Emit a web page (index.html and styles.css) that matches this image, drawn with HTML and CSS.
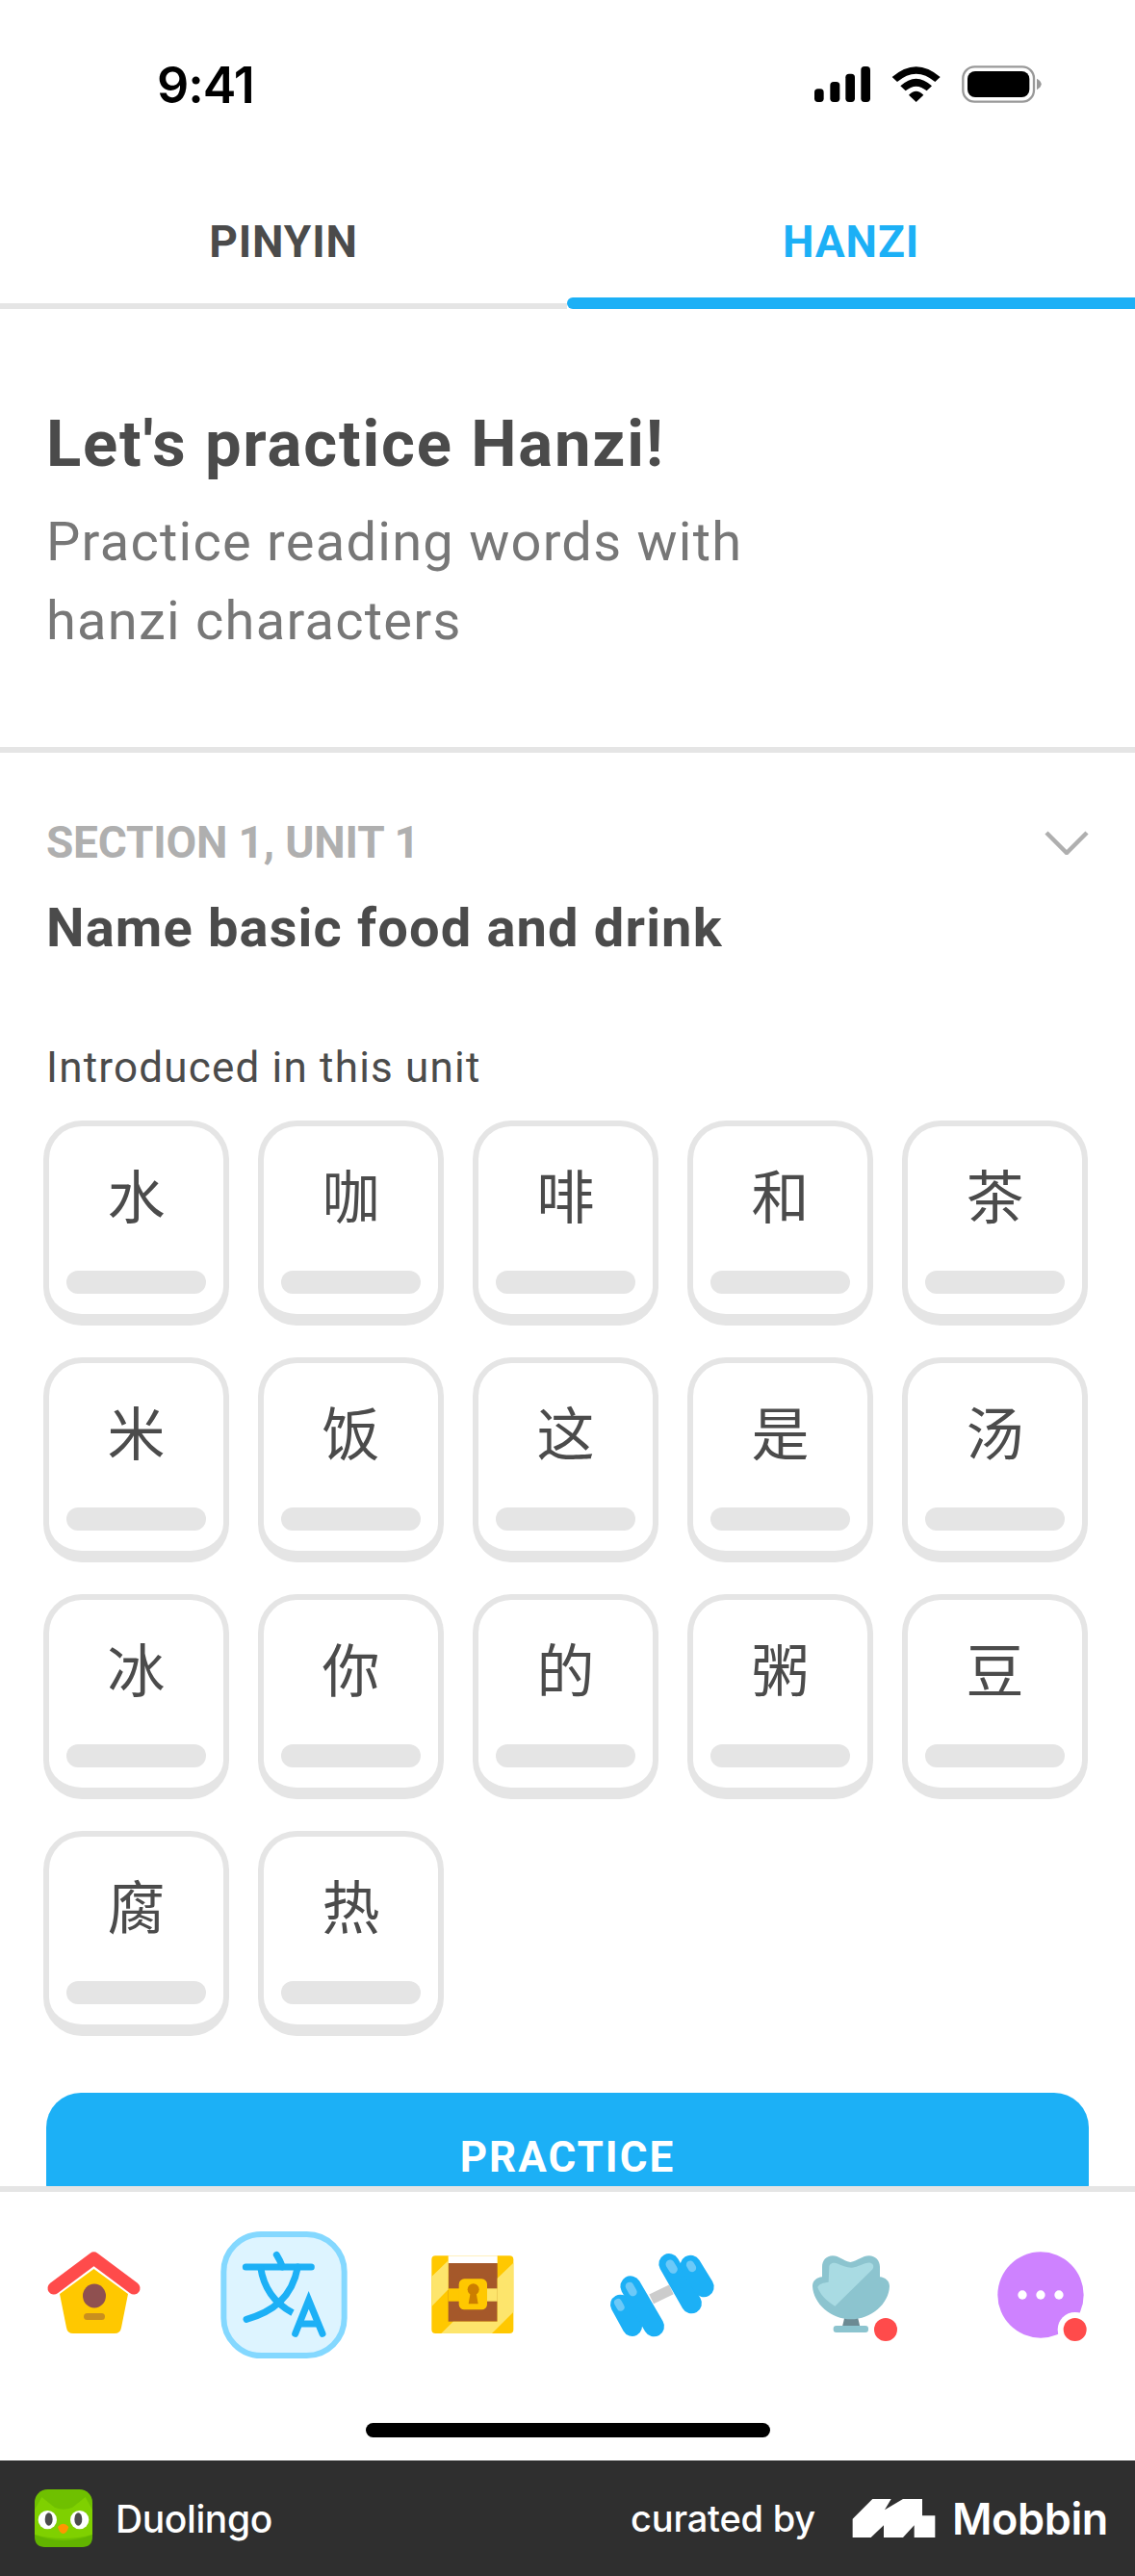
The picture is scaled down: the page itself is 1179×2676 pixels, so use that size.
FILE: index.html
```html
<!DOCTYPE html>
<html lang="en">
<head>
    <meta charset="UTF-8">
    <meta name="viewport" content="width=device-width, initial-scale=1.0">
    <title>Duolingo - Hanzi practice</title>
    <link rel="stylesheet" href="styles.css">
</head>
<body>
<div class="screen">
    <!-- Status bar -->
    <div class="status">
        <span class="status-time">9:41</span>
        <svg class="status-icons" viewBox="0 0 810 210">
            <rect x="78" y="127" width="29" height="41" rx="11"/>
            <rect x="127" y="105" width="30" height="63" rx="11"/>
            <rect x="175" y="80" width="29" height="88" rx="11"/>
            <rect x="223" y="57" width="29" height="111" rx="11"/>
            <path d="M320 90 Q395 25 470 90 L454 105 Q395 55 336 105Z"/>
            <path d="M346 118 Q395 72 444 118 L428 133 Q395 105 362 133Z"/>
            <path d="M372 146 Q395 122 418 146 L395 168Z"/>
            <rect x="541" y="58" width="221" height="109" rx="36" fill="none" stroke="#999" stroke-width="7"/>
            <rect x="555" y="72" width="193" height="81" rx="24"/>
            <path d="M771 95 Q785 103 785 112 Q785 122 771 130Z" fill="#999"/>
        </svg>
    </div>

    <!-- Tabs -->
    <div class="tabs">
        <div class="tab">
            <span class="tab-label">PINYIN</span>
            <div class="tab-rule"></div>
        </div>
        <div class="tab tab-active">
            <span class="tab-label">HANZI</span>
            <div class="tab-rule"></div>
        </div>
    </div>

    <main class="content">
        <section class="intro">
            <h1>Let's practice Hanzi!</h1>
            <p>Practice reading words with<br>hanzi characters</p>
        </section>

        <section class="unit">
            <div class="unit-head">
                <span class="unit-label">SECTION 1, UNIT 1</span>
                <svg class="chevron" viewBox="0 0 46 25">
                    <path d="M2 2 L23 23 L44 2" fill="none" stroke="#afafaf" stroke-width="4.5"/>
                </svg>
            </div>
            <h2>Name basic food and drink</h2>
            <div class="unit-note">Introduced in this unit</div>

            <div class="chars">
                <div class="char-card"><div class="char">水</div><div class="char-bar"></div></div>
                <div class="char-card"><div class="char">咖</div><div class="char-bar"></div></div>
                <div class="char-card"><div class="char">啡</div><div class="char-bar"></div></div>
                <div class="char-card"><div class="char">和</div><div class="char-bar"></div></div>
                <div class="char-card"><div class="char">茶</div><div class="char-bar"></div></div>
                <div class="char-card"><div class="char">米</div><div class="char-bar"></div></div>
                <div class="char-card"><div class="char">饭</div><div class="char-bar"></div></div>
                <div class="char-card"><div class="char">这</div><div class="char-bar"></div></div>
                <div class="char-card"><div class="char">是</div><div class="char-bar"></div></div>
                <div class="char-card"><div class="char">汤</div><div class="char-bar"></div></div>
                <div class="char-card"><div class="char">冰</div><div class="char-bar"></div></div>
                <div class="char-card"><div class="char">你</div><div class="char-bar"></div></div>
                <div class="char-card"><div class="char">的</div><div class="char-bar"></div></div>
                <div class="char-card"><div class="char">粥</div><div class="char-bar"></div></div>
                <div class="char-card"><div class="char">豆</div><div class="char-bar"></div></div>
                <div class="char-card"><div class="char">腐</div><div class="char-bar"></div></div>
                <div class="char-card"><div class="char">热</div><div class="char-bar"></div></div>
            </div>

            <button class="practice">PRACTICE</button>
        </section>
    </main>

    <!-- Bottom navigation -->
    <nav class="nav">
        <div class="nav-icons">
            <svg class="nav-icon" viewBox="0 0 132 132">
                <path d="M65.500 39 L101 65 L94 100 Q93 106 87 106 H44 Q38 106 37 100 L30 65Z" fill="#ffc800"/>
                <path d="M24 59 L65.500 28 L107 59" fill="none" stroke="#ff4b4b" stroke-width="13" stroke-linecap="round" stroke-linejoin="round"/>
                <ellipse cx="66" cy="67" rx="12" ry="12.500" fill="#8f5050"/>
                <rect x="55" y="85" width="22" height="7" rx="3.500" fill="#c98f1e"/>
            </svg>
            <svg class="nav-icon" viewBox="87 84 396 396">
                <rect x="97" y="93" width="376" height="378" rx="117" fill="#ddf4ff" stroke="#84d8ff" stroke-width="18"/>
                <g fill="none" stroke="#1cb0f6" stroke-width="21" stroke-linecap="round">
                    <path d="M166 195 H370"/>
                    <path d="M262 157 Q272 172 280 195"/>
                    <path d="M212 195 C222 265 260 310 312 338" stroke-linecap="butt"/>
                    <path d="M328 195 C310 290 250 335 168 358"/>
                    <path d="M320 403 L362 298 L405 403"/>
                    <path d="M335 372 H392" stroke-linecap="butt"/>
                </g>
            </svg>
            <svg class="nav-icon" viewBox="675 84 396 396">
                <rect x="745" y="160" width="255" height="242" rx="12" fill="#ffc800"/>
                <rect x="797" y="160" width="153" height="24" fill="#fff"/>
                <rect x="797" y="183" width="153" height="182" fill="#a5582a"/>
                <path d="M745 225 L797 175 V265 L745 318Z" fill="#fde56c"/>
                <path d="M950 230 L1000 182 V335 L933 402 H775 L812 365 H950Z" fill="#fde56c"/>
                <rect x="797" y="262" width="40" height="40" fill="#ffc800"/>
                <rect x="912" y="262" width="38" height="40" fill="#fde56c"/>
                <rect x="830" y="232" width="88" height="96" rx="17" fill="#ffc800"/>
                <circle cx="875" cy="265" r="18" fill="#cc7e00"/>
                <path d="M866 275 H884 L890 310 H860Z" fill="#cc7e00"/>
            </svg>
            <svg class="nav-icon" viewBox="6 -6 396 396">
                <path d="M170 205 L232 175" stroke="#ccc" stroke-width="32"/>
                <g fill="none" stroke="#1cb0f6" stroke-linecap="round">
                    <path d="M73 222 L110 290" stroke-width="62"/>
                    <path d="M105 165 L178 290" stroke-width="64"/>
                    <path d="M225 95 L295 218" stroke-width="64"/>
                    <path d="M292 100 L333 167" stroke-width="64"/>
                </g>
                <g fill="none" stroke="#6cc9f8" stroke-linecap="round">
                    <path d="M102 165 L112 183" stroke-width="26"/>
                    <path d="M66 216 L74 230" stroke-width="24"/>
                    <path d="M228 96 L238 112" stroke-width="27"/>
                    <path d="M291 98 L297 108" stroke-width="25"/>
                </g>
            </svg>
            <svg class="nav-icon" viewBox="114 84 396 396">
                <path d="M292 352 H333 L340 380 H285Z" fill="#6c8a93"/>
                <rect x="257" y="378" width="109" height="21" rx="9" fill="#8cc4cf"/>
                <path d="M310 180 C285 175 275 160 255 160 C235 160 222 175 222 195 L222 226 C205 228 192 238 192 255 C195 310 250 358 312 358 C375 358 430 310 432 255 C432 238 418 228 402 226 L402 195 C402 175 388 160 368 160 C348 160 335 175 310 180Z" fill="#8cc4cf"/>
                <path d="M244 195 C244 185 255 180 265 183 C285 190 300 198 315 197 C335 196 355 180 372 182 C382 184 385 195 378 203 L262 317 C235 300 215 280 208 258 C212 248 225 244 242 242Z" fill="#a9dbe3"/>
                <circle cx="420" cy="390" r="36" fill="#ff4b4b"/>
            </svg>
            <svg class="nav-icon" viewBox="705 84 396 396">
                <circle cx="903" cy="282" r="134" fill="#ce82ff"/>
                <circle cx="846" cy="282" r="14" fill="#fff"/>
                <circle cx="903" cy="282" r="14" fill="#fff"/>
                <circle cx="960" cy="282" r="14" fill="#fff"/>
                <circle cx="1010" cy="390" r="54" fill="#fff"/>
                <circle cx="1010" cy="390" r="36" fill="#ff4b4b"/>
            </svg>
        </div>
        <div class="home-bar"></div>
    </nav>

    <!-- Footer strip -->
    <footer class="credits">
        <div class="credits-app">
            <svg class="app-logo" viewBox="48 48 180 180">
                <rect x="48" y="48" width="180" height="180" rx="40" fill="#6fc000"/>
                <path d="M48 112 L70 72 L110 104 Q138 116 166 104 L206 72 L228 112 V188 Q138 214 48 188Z" fill="#7fd000"/>
                <path d="M48 190 Q138 225 228 190 V195 Q228 228 195 228 H81 Q48 228 48 195Z" fill="#62b400"/>
                <circle cx="88" cy="143" r="29" fill="#fff"/>
                <circle cx="188" cy="143" r="29" fill="#fff"/>
                <ellipse cx="92" cy="141" rx="12" ry="20" fill="#4b4b4b"/>
                <ellipse cx="184" cy="141" rx="12" ry="20" fill="#4b4b4b"/>
                <path d="M120 165 Q137 145 154 165 Q148 186 137 186 Q126 186 120 165Z" fill="#ff9600"/>
            </svg>
            <span class="app-name">Duolingo</span>
        </div>
        <div class="credits-by">
            <span class="curated">curated by</span>
            <svg class="mobbin-logo" viewBox="728 78 257 120">
                <path d="M728 140 L790 78 H848 L828 112 L885 78 H945 V130 H985 V198 H920 V160 L885 198 H825 V160 L785 198 H728Z" fill="#fff"/>
            </svg>
            <span class="mobbin-name">Mobbin</span>
        </div>
    </footer>
</div>
</body>
</html>
```
FILE: styles.css
```css
* {
    box-sizing: border-box;
}
body {
    margin: 0;
    background-color: #fff;
    color: #4b4b4b;
    font-family: Roboto, "Noto Sans CJK SC", sans-serif;
}
h1, h2, p {
    margin: 0;
}
.screen {
    width: 1179px;
    height: 2676px;
    display: flex;
    flex-direction: column;
    overflow: hidden;
}

/* status bar */
.status {
    height: 170px;
    flex: none;
    display: flex;
    justify-content: space-between;
    align-items: center;
    padding: 0 89px 0 163px;
}
.status-time {
    font-family: Inter, sans-serif;
    font-size: 52px;
    font-weight: 600;
    color: #000;
    padding-top: 6px;
    letter-spacing: -1px;
}
.status-icons {
    width: 270px;
    height: 70px;
}

/* tabs */
.tabs {
    height: 151px;
    flex: none;
    display: grid;
    grid-template-columns: 589px 590px;
}
.tab {
    display: flex;
    flex-direction: column;
    justify-content: flex-end;
    align-items: center;
}
.tab-label {
    font-size: 46px;
    line-height: 46px;
    font-weight: 700;
    letter-spacing: 0.9px;
    margin-bottom: 41px;
}
.tab-rule {
    width: 100%;
    height: 6px;
    background-color: #e5e5e5;
}
.tab-active .tab-label {
    color: #1cb0f6;
    margin-bottom: 35px;
}
.tab-active .tab-rule {
    height: 12px;
    background-color: #1cb0f6;
    border-radius: 6px 0 0 6px;
}

/* main part */
.content {
    flex: 1;
    min-height: 0;
    overflow: hidden;
}
.intro {
    padding: 100px 48px 90px;
    border-bottom: 6px solid #e5e5e5;
}
.intro h1 {
    font-size: 67px;
    line-height: 80px;
    font-weight: 700;
    letter-spacing: 1.8px;
}
.intro p {
    margin-top: 21px;
    font-size: 56px;
    line-height: 82px;
    color: #777;
    letter-spacing: 1.25px;
}
.unit {
    padding: 65px 48px 0;
}
.unit-head {
    display: flex;
    justify-content: space-between;
    align-items: center;
}
.unit-label {
    font-size: 46px;
    line-height: 56px;
    font-weight: 700;
    color: #afafaf;
    letter-spacing: -0.2px;
}
.chevron {
    width: 46px;
    height: 25px;
}
.unit h2 {
    margin-top: 29px;
    font-size: 56px;
    line-height: 64px;
    font-weight: 700;
    letter-spacing: 1.15px;
}
.unit-note {
    margin-top: 88px;
    font-size: 44px;
    line-height: 50px;
    letter-spacing: 1.2px;
}

/* character cards */
.chars {
    margin: 30px 0 0 -3px;
    display: grid;
    grid-template-columns: repeat(5, 193px);
    grid-auto-rows: 213px;
    gap: 33px 30px;
}
.char-card {
    border: 6px solid #e5e5e5;
    border-bottom-width: 12px;
    border-radius: 40px;
    padding: 0 18px;
}
.char {
    height: 138px;
    margin-bottom: 12px;
    display: flex;
    align-items: center;
    justify-content: center;
    font-family: "Noto Sans CJK SC", sans-serif;
    font-size: 60px;
}
.char-bar {
    height: 24px;
    border-radius: 12px;
    background-color: #e5e5e5;
}
.practice {
    display: block;
    width: 1083px;
    height: 130px;
    margin-top: 59px;
    padding: 4px 0 0;
    border: 0;
    border-radius: 36px;
    background-color: #1cb0f6;
    color: #fff;
    font-family: Roboto, sans-serif;
    font-size: 44px;
    font-weight: 700;
    letter-spacing: 2px;
}

/* bottom nav */
.nav {
    height: 285px;
    flex: none;
    border-top: 6px solid #e5e5e5;
    padding-top: 41px;
    background-color: #fff;
}
.nav-icons {
    display: grid;
    grid-template-columns: repeat(6, 1fr);
    justify-items: center;
}
.nav-icon {
    width: 132px;
    height: 132px;
    display: block;
}
.home-bar {
    width: 420px;
    height: 15px;
    margin: 67px auto 0;
    border-radius: 8px;
    background-color: #000;
}

/* footer strip */
.credits {
    height: 120px;
    flex: none;
    display: flex;
    justify-content: space-between;
    align-items: center;
    padding: 0 28px 0 36px;
    background-color: #2f2f2f;
    color: #fff;
    font-family: Inter, sans-serif;
}
.credits-app, .credits-by {
    display: flex;
    align-items: center;
}
.app-logo {
    width: 60px;
    height: 60px;
    margin-right: 24px;
}
.app-name {
    font-size: 39px;
    font-weight: 500;
    letter-spacing: -0.4px;
}
.curated {
    font-size: 38px;
    font-weight: 500;
    letter-spacing: -0.2px;
}
.mobbin-logo {
    width: 87px;
    height: 40px;
    margin: 0 17px 0 38px;
}
.mobbin-name {
    font-size: 45px;
    font-weight: 600;
    letter-spacing: -0.4px;
}
```
